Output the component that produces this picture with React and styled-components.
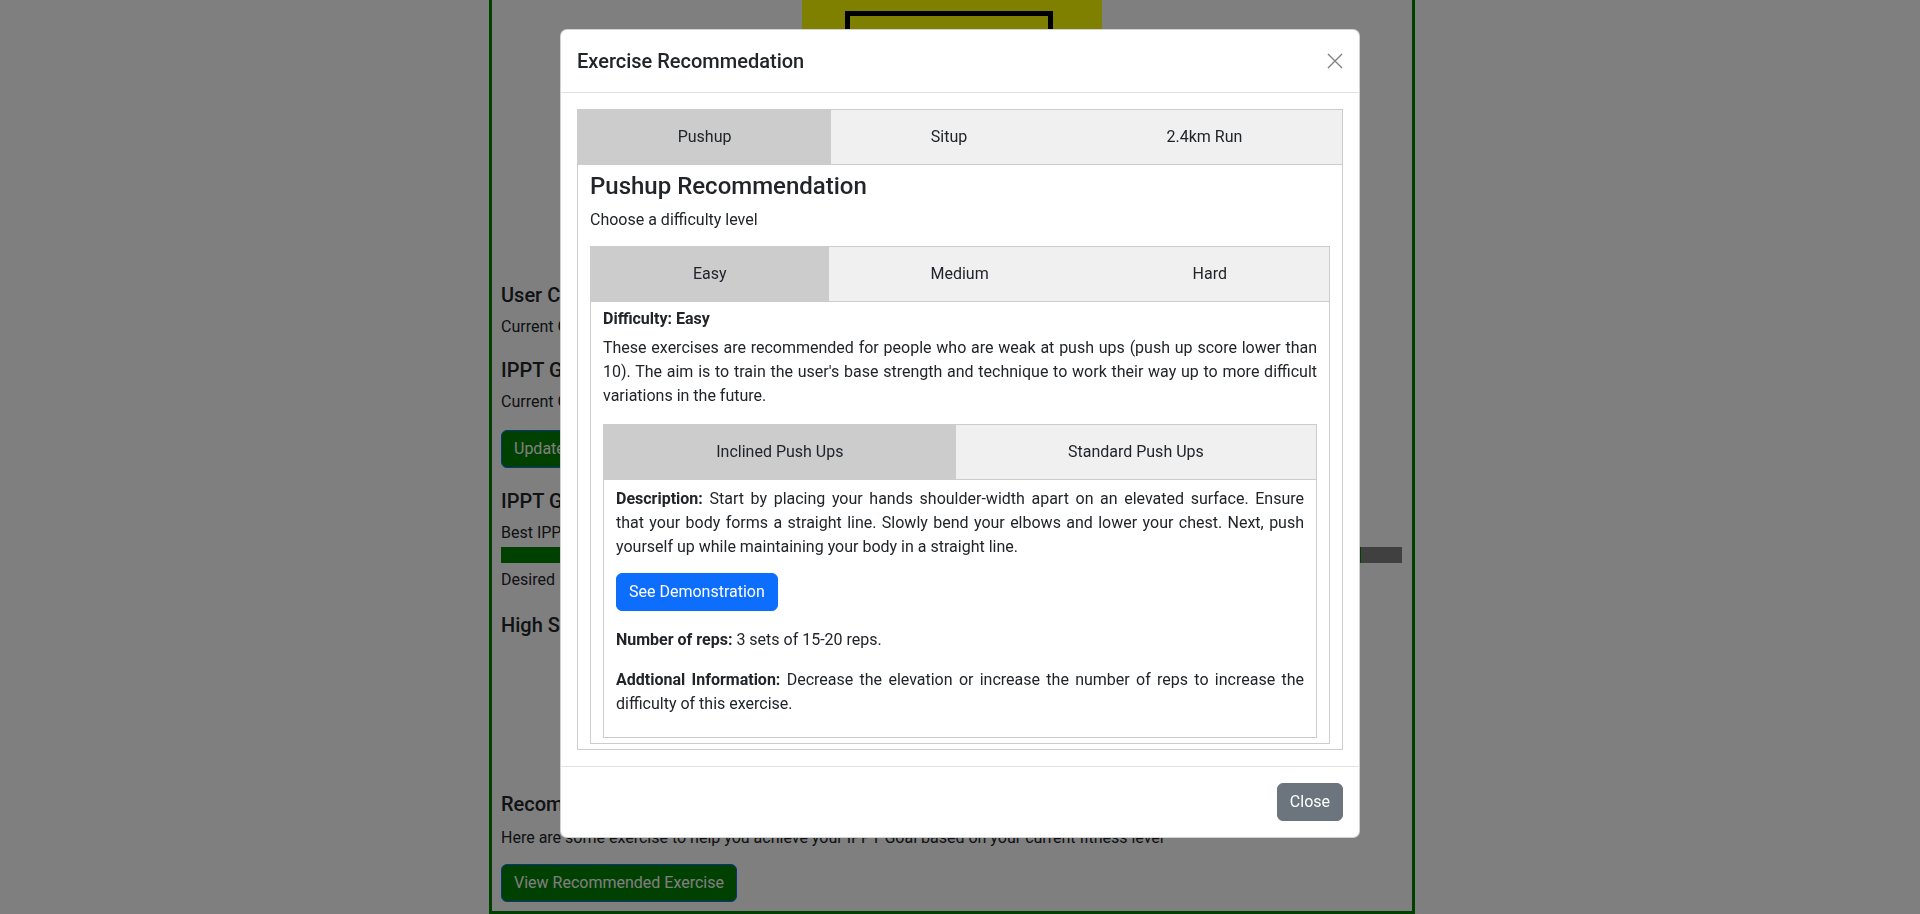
import React, { useState } from 'react';
import styled, { createGlobalStyle } from 'styled-components';

const GlobalStyle = createGlobalStyle`
  html, body {
    margin: 0;
    padding: 0;
  }
  body {
    font-family: Roboto, "Liberation Sans", sans-serif;
    font-size: 16px;
    line-height: 1.5;
    color: #212529;
    background: #fff;
    overflow: hidden;
  }
  *, *::before, *::after {
    box-sizing: border-box;
  }
`;

/* ---------- page behind the modal ---------- */

const Page = styled.div`
  width: 926px;
  height: 914px;
  margin-left: 489px;
  padding: 0 10px 0 9px;
  border: 3px solid #008000;
  border-top: 0;
`;

const Banner = styled.div`
  width: 300px;
  height: 283px;
  margin: 0 auto;
  padding: 11px 0 0 43px;
  background: #ffff00;
`;

const BannerFrame = styled.div`
  width: 208px;
  height: 140px;
  border: 5px solid #000;
`;

const BgHeading = styled.h5`
  margin: 0 0 ${({ $mb }) => $mb ?? 8}px;
  font-size: 20px;
  font-weight: 500;
  line-height: 1.2;
`;

const BgText = styled.p`
  margin: 0 0 ${({ $mb }) => $mb ?? 16}px;
`;

const GreenButton = styled.button`
  display: inline-block;
  margin-bottom: ${({ $mb }) => $mb ?? 0}px;
  padding: 6px 12px;
  font: inherit;
  color: #fff;
  background: #008000;
  border: 1px solid #0d6efd;
  border-radius: 6px;
`;

const Progress = styled.div`
  height: 16px;
  margin-bottom: 5px;
  background: #808080;
`;

const ProgressFill = styled.div`
  height: 100%;
  background: #008000;
`;

const ChartArea = styled.div`
  height: 147px;
`;

/* ---------- modal ---------- */

const Backdrop = styled.div`
  position: fixed;
  inset: 0;
  background: rgba(0, 0, 0, 0.5);
`;

const ModalLayer = styled.div`
  position: fixed;
  inset: 0;
  overflow-y: auto;
`;

const Dialog = styled.div`
  width: 800px;
  margin: 29px auto;
  background: #fff;
  border: 1px solid rgba(0, 0, 0, 0.175);
  border-radius: 7px;
`;

const Header = styled.div`
  display: flex;
  align-items: center;
  justify-content: space-between;
  padding: 16px;
  border-bottom: 1px solid #dee2e6;
`;

const Title = styled.h5`
  margin: 0;
  font-size: 20px;
  font-weight: 500;
  line-height: 1.5;
`;

const CloseX = styled.button`
  display: flex;
  width: 16px;
  height: 16px;
  padding: 0;
  border: 0;
  background: transparent;
  cursor: pointer;
`;

const Body = styled.div`
  padding: 16px;
`;

const Footer = styled.div`
  display: flex;
  justify-content: flex-end;
  padding: 12px;
  border-top: 1px solid #dee2e6;
`;

const Btn = styled.button`
  margin: ${({ $m }) => $m ?? 0};
  padding: 6px 12px;
  font: inherit;
  line-height: 24px;
  color: #fff;
  background: ${({ $bg }) => $bg};
  border: 1px solid ${({ $bg }) => $bg};
  border-radius: 6px;
  cursor: pointer;
`;

/* ---------- tabs ---------- */

const TabBox = styled.div`
  border: 1px solid #ccc;
`;

const TabList = styled.div`
  display: flex;
  border-bottom: 1px solid #ccc;
`;

const Tab = styled.button`
  flex: 1 1 auto;
  padding: 15px;
  font: inherit;
  line-height: 24px;
  color: #212529;
  background: ${({ $active }) => ($active ? '#cccccc' : '#f0f0f0')};
  border: 0;
  cursor: pointer;
`;

const Panel = styled.div`
  padding: 7px 12px 5px;
`;

const PanelHeading = styled.h4`
  margin: 0 0 7px;
  font-size: 24px;
  font-weight: 500;
  line-height: 1.2;
`;

const Hint = styled.p`
  margin: 0 0 14px;
`;

const LevelHeading = styled.h6`
  margin: 0 0 8px;
  font-size: 16px;
  font-weight: 700;
  line-height: 1.2;
`;

const Para = styled.p`
  margin: 0 0 ${({ $mb }) => $mb ?? 16}px;
  text-align: justify;
`;

const XIcon = () => (
  <svg width="16" height="16" viewBox="0 0 16 16">
    <path d="M1 1 L15 15 M15 1 L1 15" stroke="#808080" strokeWidth="1.4" fill="none" />
  </svg>
);

const exercises = {
  Pushup: {
    levels: {
      Easy: {
        text: "These exercises are recommended for people who are weak at push ups (push up score lower than 10). The aim is to train the user's base strength and technique to work their way up to more difficult variations in the future.",
        moves: [
          {
            name: 'Inclined Push Ups',
            desc: 'Start by placing your hands shoulder-width apart on an elevated surface. Ensure that your body forms a straight line. Slowly bend your elbows and lower your chest. Next, push yourself up while maintaining your body in a straight line.',
            reps: '3 sets of 15-20 reps.',
            info: 'Decrease the elevation or increase the number of reps to increase the difficulty of this exercise.',
          },
          {
            name: 'Standard Push Ups',
            desc: 'Place your hands shoulder-width apart on the floor. Keep your body in a straight line, lower your chest to the floor and push back up.',
            reps: '3 sets of 10 reps.',
            info: 'Slow down the movement to increase the difficulty of this exercise.',
          },
        ],
      },
      Medium: { text: 'These exercises are recommended for people with an average push up score.', moves: [] },
      Hard: { text: 'These exercises are recommended for people who are strong at push ups.', moves: [] },
    },
  },
  Situp: { levels: { Easy: { text: 'Situp exercises for beginners.', moves: [] } } },
  '2.4km Run': { levels: { Easy: { text: 'Running exercises for beginners.', moves: [] } } },
};

function MoveTabs({ moves }) {
  const [active, setActive] = useState(0);
  if (!moves.length) return null;
  const move = moves[active];
  return (
    <TabBox>
      <TabList>
        {moves.map((m, i) => (
          <Tab key={m.name} $active={i === active} onClick={() => setActive(i)}>
            {m.name}
          </Tab>
        ))}
      </TabList>
      <Panel>
        <Para $mb={14}>
          <strong>Description:</strong> {move.desc}
        </Para>
        <Btn $bg="#0d6efd" $m="0 0 17px">See Demonstration</Btn>
        <Para>
          <strong>Number of reps:</strong> {move.reps}
        </Para>
        <Para>
          <strong>Addtional Information:</strong> {move.info}
        </Para>
      </Panel>
    </TabBox>
  );
}

function LevelTabs({ levels }) {
  const names = ['Easy', 'Medium', 'Hard'];
  const [active, setActive] = useState(names[0]);
  const level = levels[active] || { text: '', moves: [] };
  return (
    <TabBox>
      <TabList>
        {names.map((n) => (
          <Tab key={n} $active={n === active} onClick={() => setActive(n)}>
            {n}
          </Tab>
        ))}
      </TabList>
      <Panel>
        <LevelHeading>Difficulty: {active}</LevelHeading>
        <Para>{level.text}</Para>
        <MoveTabs moves={level.moves} />
      </Panel>
    </TabBox>
  );
}

function ExerciseTabs() {
  const types = Object.keys(exercises);
  const [active, setActive] = useState(types[0]);
  return (
    <TabBox>
      <TabList>
        {types.map((t) => (
          <Tab key={t} $active={t === active} onClick={() => setActive(t)}>
            {t}
          </Tab>
        ))}
      </TabList>
      <Panel>
        <PanelHeading>{active} Recommendation</PanelHeading>
        <Hint>Choose a difficulty level</Hint>
        <LevelTabs levels={exercises[active].levels} />
      </Panel>
    </TabBox>
  );
}

export default function App() {
  const [open, setOpen] = useState(true);
  return (
    <>
      <GlobalStyle />
      <Page>
        <Banner>
          <BannerFrame />
        </Banner>
        <BgHeading>User Current Fitness</BgHeading>
        <BgText $mb={19}>Current Grade: Pass</BgText>
        <BgHeading>IPPT Goal</BgHeading>
        <BgText>Current Goal: Gold</BgText>
        <GreenButton $mb={21}>Update Goal</GreenButton>
        <BgHeading>IPPT Goal Progress</BgHeading>
        <BgText $mb={2}>Best IPPT Score: 81</BgText>
        <Progress>
          <ProgressFill style={{ width: '95.5%' }} />
        </Progress>
        <BgText $mb={21}>Desired IPPT Score: 85</BgText>
        <BgHeading>High Score History</BgHeading>
        <ChartArea />
        <BgHeading $mb={10}>Recommended Exercise</BgHeading>
        <BgText $mb={14}>
          Here are some exercise to help you achieve your IPPT Goal based on your current fitness level
        </BgText>
        <GreenButton onClick={() => setOpen(true)}>View Recommended Exercise</GreenButton>
      </Page>

      {open && (
        <>
          <Backdrop />
          <ModalLayer>
            <Dialog>
              <Header>
                <Title>Exercise Recommedation</Title>
                <CloseX aria-label="Close" onClick={() => setOpen(false)}>
                  <XIcon />
                </CloseX>
              </Header>
              <Body>
                <ExerciseTabs />
              </Body>
              <Footer>
                <Btn $bg="#6c757d" $m="4px" onClick={() => setOpen(false)}>
                  Close
                </Btn>
              </Footer>
            </Dialog>
          </ModalLayer>
        </>
      )}
    </>
  );
}
